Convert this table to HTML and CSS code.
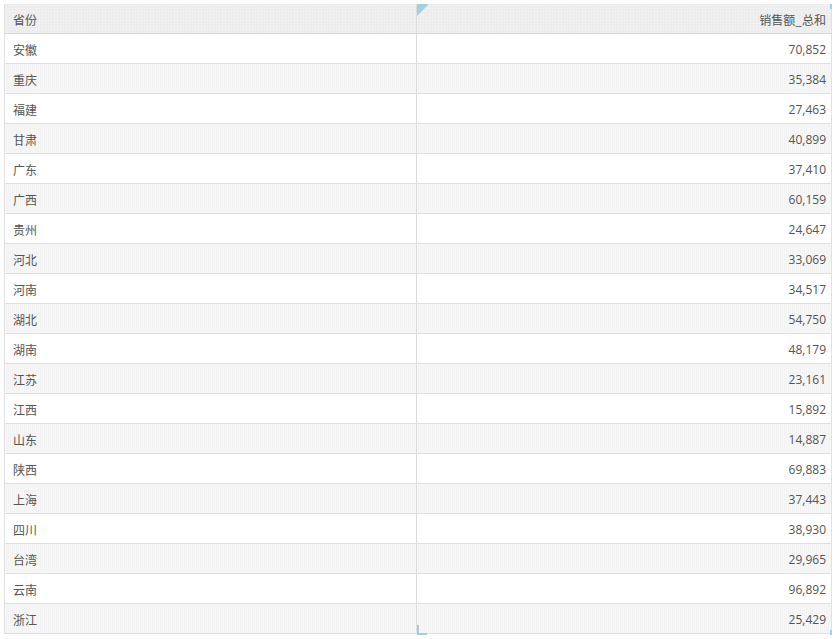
FILE: index.html
```html
<!DOCTYPE html>
<html lang="zh">
<head>
<meta charset="utf-8">
<title>省份 销售额</title>
<link rel="stylesheet" href="styles.css">
</head>
<body>
<div class="wrap">
  <div class="grid">
    <div class="row head"><div class="c1">省份</div><div class="c2">销售额_总和</div></div>
    <div class="row"><div class="c1">安徽</div><div class="c2">70,852</div></div>
    <div class="row alt"><div class="c1">重庆</div><div class="c2">35,384</div></div>
    <div class="row"><div class="c1">福建</div><div class="c2">27,463</div></div>
    <div class="row alt"><div class="c1">甘肃</div><div class="c2">40,899</div></div>
    <div class="row"><div class="c1">广东</div><div class="c2">37,410</div></div>
    <div class="row alt"><div class="c1">广西</div><div class="c2">60,159</div></div>
    <div class="row"><div class="c1">贵州</div><div class="c2">24,647</div></div>
    <div class="row alt"><div class="c1">河北</div><div class="c2">33,069</div></div>
    <div class="row"><div class="c1">河南</div><div class="c2">34,517</div></div>
    <div class="row alt"><div class="c1">湖北</div><div class="c2">54,750</div></div>
    <div class="row"><div class="c1">湖南</div><div class="c2">48,179</div></div>
    <div class="row alt"><div class="c1">江苏</div><div class="c2">23,161</div></div>
    <div class="row"><div class="c1">江西</div><div class="c2">15,892</div></div>
    <div class="row alt"><div class="c1">山东</div><div class="c2">14,887</div></div>
    <div class="row"><div class="c1">陕西</div><div class="c2">69,883</div></div>
    <div class="row alt"><div class="c1">上海</div><div class="c2">37,443</div></div>
    <div class="row"><div class="c1">四川</div><div class="c2">38,930</div></div>
    <div class="row alt"><div class="c1">台湾</div><div class="c2">29,965</div></div>
    <div class="row"><div class="c1">云南</div><div class="c2">96,892</div></div>
    <div class="row alt"><div class="c1">浙江</div><div class="c2">25,429</div></div>
    <div class="mark-tri"></div>
    <div class="mark-tr"></div>
    <div class="mark-bl"></div>
    <div class="mark-br"></div>
  </div>
</div>
</body>
</html>
```
FILE: styles.css
```css
html, body {
  margin: 0;
  padding: 0;
  background: #ffffff;
}
.wrap {
  padding: 4px;
}
.grid {
  position: relative;
  width: 828px;
  border-left: 1px solid #e2e2e2;
  box-sizing: border-box;
  font-family: "Open Sans", "Noto Sans CJK SC", sans-serif;
  font-size: 12px;
  color: #555;
}
.row {
  display: flex;
  height: 30px;
  border-bottom: 1px solid #e0e0e0;
  box-sizing: border-box;
  background: #ffffff;
}
.row.alt {
  background-color: #f3f3f3;
  background-image: repeating-linear-gradient(90deg, rgba(255,255,255,0.35) 0 1px, transparent 1px 2px);
}
.row.head {
  background-color: #ededed;
  background-image: radial-gradient(rgba(255,255,255,0.6) 0.6px, transparent 0.8px);
  background-size: 3px 3px;
  border-bottom: 1px solid #d4d4d4;
}
.c1 {
  width: 412px;
  padding-left: 8px;
  padding-top: 1px;
  box-sizing: border-box;
  display: flex;
  align-items: center;
  border-right: 1px solid #dcdcdc;
  font-family: "Noto Sans CJK SC", sans-serif;
}
.c2 {
  flex: 1;
  padding-right: 5px;
  padding-top: 1px;
  box-sizing: border-box;
  display: flex;
  align-items: center;
  justify-content: flex-end;
  border-right: 1px solid #e2e2e2;
}
.head .c2 {
  font-family: "Noto Sans CJK SC", sans-serif;
}
.mark-tri {
  position: absolute;
  left: 412px;
  top: 0;
  width: 0;
  height: 0;
  border-top: 12px solid #a3d0de;
  border-right: 12px solid transparent;
}
.mark-tr {
  position: absolute;
  right: 0;
  top: 0;
  width: 2px;
  height: 5px;
  background: #a3d0de;
}
.mark-bl {
  position: absolute;
  left: 412px;
  bottom: -1px;
  width: 10px;
  height: 10px;
  border-left: 2px solid #a3d0de;
  border-bottom: 2px solid #a3d0de;
  box-sizing: border-box;
}
.mark-br {
  position: absolute;
  right: 0;
  bottom: -1px;
  width: 2px;
  height: 5px;
  background: #a3d0de;
}
```
